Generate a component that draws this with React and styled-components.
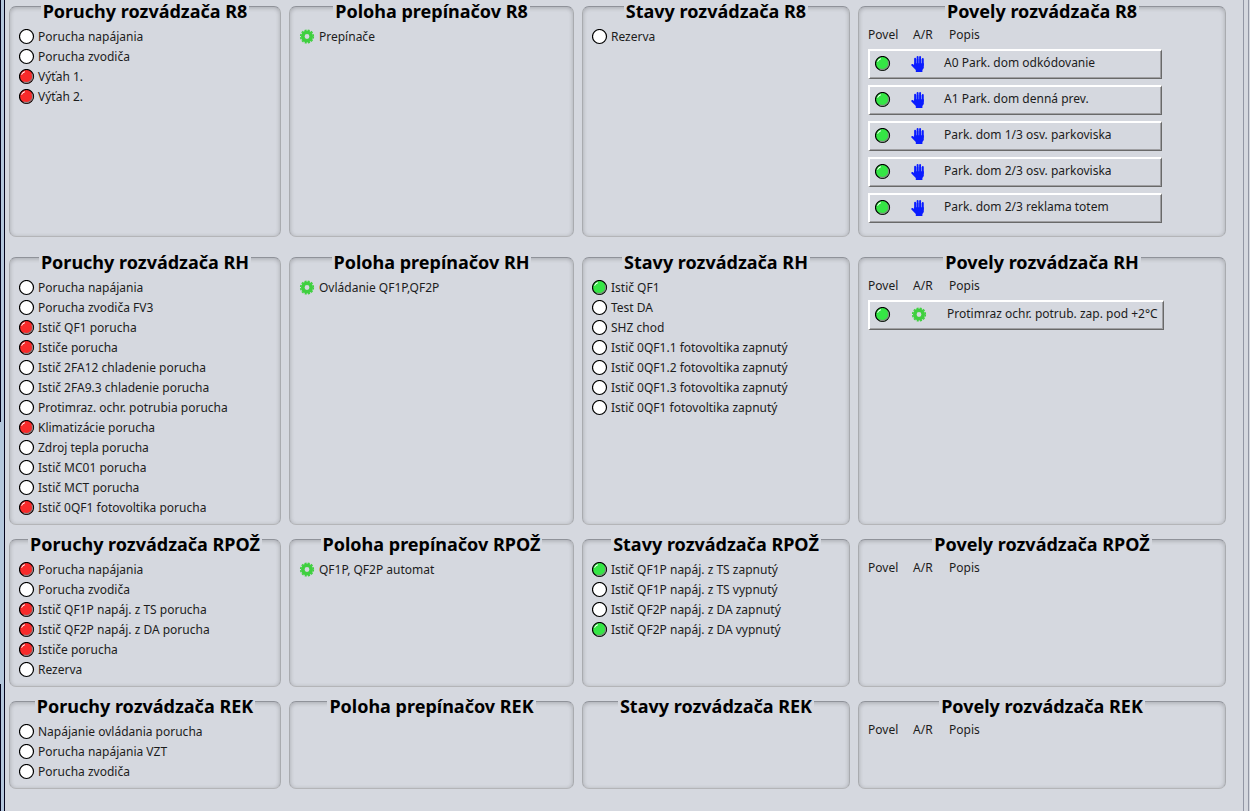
import styled, { createGlobalStyle } from "styled-components";

const GlobalStyle = createGlobalStyle`
  * {
    box-sizing: border-box;
  }

  body {
    margin: 0;
    background-color: #d5d8df;
    color: #1c1c1c;
    font-family: "Noto Sans", sans-serif;
    font-size: 12px;
    line-height: 16px;
  }
`;

const Screen = styled.div`
  display: flex;
  min-height: 100vh;
  overflow: hidden;
`;

const LeftEdge = styled.div`
  display: flex;
  flex-direction: column;
  width: 5px;
  background-color: #b4c7dc;
  border-right: 1px solid #04041c;
`;

const EdgePart = styled.div`
  flex: ${(props) => props.$size};
  border-left: 1px solid ${(props) => (props.$dark ? "#04041c" : "#b4c7dc")};
`;

const RightEdge = styled.div`
  width: 6px;
  margin: 0 1px 0 17px;
  border-left: 1px solid #9296a4;
  border-right: 1px solid #9296a4;
`;

const Main = styled.main`
  flex: 1;
  min-width: 0;
  padding: 6px 0 0 4px;
`;

const Section = styled.section`
  display: grid;
  grid-template-columns: 272fr 285fr 268fr 368fr;
  gap: 8px;
  margin-bottom: ${(props) => (props.$wide ? "20px" : "14px")};
`;

const Panel = styled.div`
  min-width: 0;
  padding: 0 9px 6px;
  border: 1px solid #a9abaf;
  border-top-color: #8f9299;
  border-bottom-color: #b4b5b8;
  border-radius: 7px;
  box-shadow: inset 0 1px 4px rgba(0, 0, 0, 0.22);
`;

const Title = styled.h2`
  width: fit-content;
  margin: -8px auto 4px;
  padding: 0 2px;
  background-color: #d5d8df;
  color: #000;
  font-size: 18px;
  font-weight: 700;
  line-height: 24px;
  white-space: nowrap;
`;

const List = styled.ul`
  margin: 0;
  padding: 0;
  list-style: none;
`;

const Item = styled.li`
  display: flex;
  align-items: center;
  gap: 2px;
  height: 20px;
  white-space: nowrap;
`;

const Header = styled.div`
  display: grid;
  grid-template-columns: 45px 36px auto;
  margin-bottom: 6px;
`;

const Commands = styled.div`
  display: flex;
  flex-direction: column;
  align-items: flex-start;
  gap: 6px;
  margin-bottom: 7px;
`;

const Command = styled.button`
  display: flex;
  align-items: center;
  min-width: 294px;
  height: 30px;
  padding: 0 5px 2px;
  background-color: #d5d8df;
  border: 1px solid #696969;
  border-top: 2px solid #fff;
  border-left: 2px solid #fff;
  box-shadow: inset -1px -1px 0 #a0a0a3;
  color: inherit;
  font: inherit;
  white-space: nowrap;
`;

const Mode = styled.span`
  display: flex;
  margin: 0 18px 0 19px;
`;

const CommandText = styled.span`
  padding-bottom: 1px;
`;

const Icon = styled.svg`
  display: block;
  flex: none;
`;

const ledColors = { red: "#f82a2a", green: "#35e645", off: "#fff" };

const Led = ({ color }) => (
  <Icon width="17" height="16" viewBox="0 0 17 16">
    <circle cx="7.5" cy="7.5" r="7" fill={ledColors[color]} stroke="#000" strokeWidth="1.2" />
    {color !== "off" && (
      <>
        <path d="M12.8 4.7 A6 6 0 0 1 4.7 12.8" fill="none" stroke="#858585" strokeWidth="1.1" />
        <path d="M2 6 A5.8 5.8 0 0 1 6 2 L5.6 3.4 L4 4.2 L3.2 5.6Z" fill="#fff" />
      </>
    )}
  </Icon>
);

const Gear = () => (
  <Icon width="18" height="16" viewBox="0 0 18 16">
    <circle cx="8" cy="7.5" r="4.2" fill="none" stroke="#3fd03f" strokeWidth="3.6" />
    <circle
      cx="8"
      cy="7.5"
      r="6.4"
      fill="none"
      stroke="#3fd03f"
      strokeWidth="1.4"
      strokeDasharray="2.1 1.251"
    />
  </Icon>
);

const Hand = () => (
  <Icon width="15" height="16" viewBox="0 0 15 16">
    <path d="M4 3 H12 V9 H4Z" fill="#8f9cf0" />
    <path
      d="M4.1 9 V2.8 M6.6 8 V1 M9.1 8 V1 M11.8 9 V3"
      fill="none"
      stroke="#0a1cff"
      strokeWidth="1.9"
      strokeLinecap="round"
    />
    <path d="M3.1 7.2 H12.8 V12 L11.4 14 V16 H4.8 V14 L0.2 9.3 Q0.2 7.8 1.8 8.1 L3.1 9Z" fill="#0a1cff" />
  </Icon>
);

const sections = [
  {
    name: "R8",
    faults: [
      ["Porucha napájania", "off"],
      ["Porucha zvodiča", "off"],
      ["Výťah 1.", "red"],
      ["Výťah 2.", "red"],
    ],
    switches: ["Prepínače"],
    states: [["Rezerva", "off"]],
    commands: [
      ["A0 Park. dom odkódovanie", "hand"],
      ["A1 Park. dom denná prev.", "hand"],
      ["Park. dom 1/3 osv. parkoviska", "hand"],
      ["Park. dom 2/3 osv. parkoviska", "hand"],
      ["Park. dom 2/3 reklama totem", "hand"],
    ],
  },
  {
    name: "RH",
    faults: [
      ["Porucha napájania", "off"],
      ["Porucha zvodiča FV3", "off"],
      ["Istič QF1 porucha", "red"],
      ["Ističe porucha", "red"],
      ["Istič 2FA12 chladenie porucha", "off"],
      ["Istič 2FA9.3 chladenie porucha", "off"],
      ["Protimraz. ochr. potrubia porucha", "off"],
      ["Klimatizácie porucha", "red"],
      ["Zdroj tepla porucha", "off"],
      ["Istič MC01 porucha", "off"],
      ["Istič MCT porucha", "off"],
      ["Istič 0QF1 fotovoltika porucha", "red"],
    ],
    switches: ["Ovládanie QF1P,QF2P"],
    states: [
      ["Istič QF1", "green"],
      ["Test DA", "off"],
      ["SHZ chod", "off"],
      ["Istič 0QF1.1 fotovoltika zapnutý", "off"],
      ["Istič 0QF1.2 fotovoltika zapnutý", "off"],
      ["Istič 0QF1.3 fotovoltika zapnutý", "off"],
      ["Istič 0QF1 fotovoltika zapnutý", "off"],
    ],
    commands: [["Protimraz ochr. potrub. zap. pod +2°C", "gear"]],
  },
  {
    name: "RPOŽ",
    faults: [
      ["Porucha napájania", "red"],
      ["Porucha zvodiča", "off"],
      ["Istič QF1P napáj. z TS porucha", "red"],
      ["Istič QF2P napáj. z DA porucha", "red"],
      ["Ističe porucha", "red"],
      ["Rezerva", "off"],
    ],
    switches: ["QF1P, QF2P automat"],
    states: [
      ["Istič QF1P napáj. z TS zapnutý", "green"],
      ["Istič QF1P napáj. z TS vypnutý", "off"],
      ["Istič QF2P napáj. z DA zapnutý", "off"],
      ["Istič QF2P napáj. z DA vypnutý", "green"],
    ],
    commands: [],
  },
  {
    name: "REK",
    faults: [
      ["Napájanie ovládania porucha", "off"],
      ["Porucha napájania VZT", "off"],
      ["Porucha zvodiča", "off"],
    ],
    switches: [],
    states: [],
    commands: [],
  },
];

const LedList = ({ items }) => (
  <List>
    {items.map(([text, color]) => (
      <Item key={text}>
        <Led color={color} />
        {text}
      </Item>
    ))}
  </List>
);

const App = () => {
  return (
    <>
      <GlobalStyle />
      <Screen>
        <LeftEdge>
          <EdgePart $size={422} $dark />
          <EdgePart $size={262} />
          <EdgePart $size={127} $dark />
        </LeftEdge>
        <Main>
          {sections.map((section) => (
            <Section key={section.name} $wide={section.name === "R8"}>
              <Panel>
                <Title>Poruchy rozvádzača {section.name}</Title>
                <LedList items={section.faults} />
              </Panel>
              <Panel>
                <Title>Poloha prepínačov {section.name}</Title>
                <List>
                  {section.switches.map((text) => (
                    <Item key={text}>
                      <Gear />
                      {text}
                    </Item>
                  ))}
                </List>
              </Panel>
              <Panel>
                <Title>Stavy rozvádzača {section.name}</Title>
                <LedList items={section.states} />
              </Panel>
              <Panel>
                <Title>Povely rozvádzača {section.name}</Title>
                <Header>
                  <span>Povel</span>
                  <span>A/R</span>
                  <span>Popis</span>
                </Header>
                <Commands>
                  {section.commands.map(([text, mode]) => (
                    <Command key={text} type="button">
                      <Led color="green" />
                      <Mode>{mode === "hand" ? <Hand /> : <Gear />}</Mode>
                      <CommandText>{text}</CommandText>
                    </Command>
                  ))}
                </Commands>
              </Panel>
            </Section>
          ))}
        </Main>
        <RightEdge />
      </Screen>
    </>
  );
};

export default App;
